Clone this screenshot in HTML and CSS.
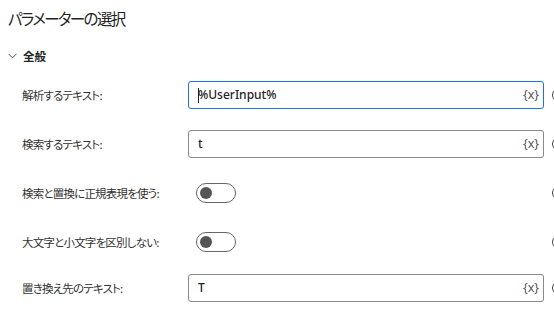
FILE: index.html
```html
<!DOCTYPE html>
<html lang="ja">
<head>
<meta charset="utf-8">
<link rel="stylesheet" href="styles.css">
</head>
<body>
<div class="panel">
  <h1 class="title">パラメーターの選択</h1>
  <div class="section-head">
    <svg class="chev" width="9" height="6" viewBox="0 0 9 6"><path d="M0.5 0.8 L4.5 4.8 L8.5 0.8" fill="none" stroke="#555" stroke-width="1"/></svg>
    <span>全般</span>
  </div>
  <div class="rows">
    <div class="row">
      <label class="lbl">解析するテキスト:</label>
      <div class="field focused"><span class="caret"></span><span class="val">%UserInput%</span><span class="var">{x}</span></div>
      <span class="info"></span>
    </div>
    <div class="row">
      <label class="lbl">検索するテキスト:</label>
      <div class="field"><span class="val">t</span><span class="var">{x}</span></div>
      <span class="info"></span>
    </div>
    <div class="row">
      <label class="lbl">検索と置換に正規表現を使う:</label>
      <div class="cell"><span class="toggle"><span class="knob"></span></span></div>
      <span class="info"></span>
    </div>
    <div class="row">
      <label class="lbl">大文字と小文字を区別しない:</label>
      <div class="cell"><span class="toggle"><span class="knob"></span></span></div>
      <span class="info"></span>
    </div>
    <div class="row last">
      <label class="lbl">置き換え先のテキスト:</label>
      <div class="field"><span class="val">T</span><span class="var">{x}</span></div>
      <span class="info"></span>
    </div>
  </div>
</div>
</body>
</html>
```
FILE: styles.css
```css
html, body {
  margin: 0;
  padding: 0;
  background: #ffffff;
  overflow: hidden;
}
body {
  width: 554px;
  height: 310px;
  font-family: "Noto Sans", "Noto Sans CJK JP", sans-serif;
  color: #242424;
}
.panel {
  padding: 0 0 0 8px;
}
.title {
  margin: 0;
  padding-top: 6px;
  height: 35px;
  font-family: "Noto Sans CJK JP", sans-serif;
  font-feature-settings: "palt";
  font-size: 15.5px;
  letter-spacing: -1.6px;
  font-weight: 400;
  line-height: 24px;
  color: #242424;
}
.section-head {
  display: flex;
  align-items: center;
  gap: 6px;
  height: 29px;
  font-family: "Noto Sans CJK JP", sans-serif;
  font-size: 11.5px;
  font-weight: 700;
  color: #242424;
}
.chev {
  margin-top: 1px;
}
.rows {
  margin-top: 0;
}
.row {
  display: grid;
  grid-template-columns: 161px 356px 16px;
  column-gap: 5px;
  align-items: center;
  height: 49px;
  padding-left: 14px;
}
.row.last {
  height: 43px;
}
.lbl {
  font-family: "Noto Sans CJK JP", sans-serif;
  font-feature-settings: "palt";
  font-size: 11.5px;
  letter-spacing: -0.8px;
  color: #333333;
}
.field {
  box-sizing: border-box;
  height: 28px;
  border: 1px solid #8a8a8a;
  border-radius: 3px;
  display: flex;
  align-items: center;
  padding: 0 4px 0 9px;
  position: relative;
}
.field.focused {
  border-color: #1a73e8;
}
.caret {
  position: absolute;
  left: 9px;
  top: 6px;
  width: 1px;
  height: 15px;
  background: #222;
}
.val {
  flex: 1;
  font-family: "Noto Sans", sans-serif;
  font-size: 12px;
  font-weight: 500;
  color: #242424;
}
.var {
  font-family: "Noto Sans", sans-serif;
  font-size: 12.5px;
  color: #555555;
}
.cell {
  display: flex;
  align-items: center;
  padding-left: 8px;
}
.toggle {
  box-sizing: border-box;
  width: 40px;
  height: 20px;
  border: 1px solid #666666;
  border-radius: 10px;
  display: flex;
  align-items: center;
  padding-left: 3px;
}
.knob {
  width: 12px;
  height: 12px;
  border-radius: 50%;
  background: #555555;
}
.info {
  box-sizing: border-box;
  width: 14px;
  height: 14px;
  border: 1.5px solid #444;
  border-radius: 50%;
  margin-left: 3px;
}
```
